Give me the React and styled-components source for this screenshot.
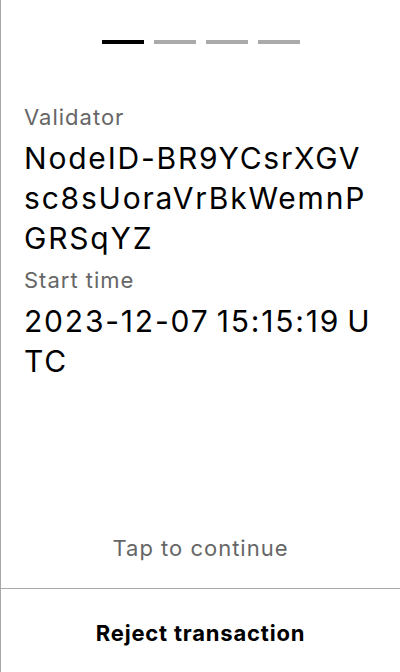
import React from 'react';
import styled, { createGlobalStyle } from 'styled-components';

const GlobalStyle = createGlobalStyle`
    html, body {
        margin: 0;
        padding: 0;
        background: #fff;
    }
    body {
        font-family: Inter, 'Noto Sans', sans-serif;
        -webkit-font-smoothing: antialiased;
    }
`;

const Screen = styled.div`
    height: 672px;
    display: flex;
    flex-direction: column;
    border-left: 1px solid #a8a8a8;
    box-sizing: border-box;
    color: #000;
`;

const Progress = styled.div`
    display: flex;
    justify-content: center;
    gap: 10px;
    padding-top: 40px;
`;

const Step = styled.span`
    width: 42px;
    height: 4px;
    background: ${({ $active }) => ($active ? '#000' : '#aaa')};
`;

const Details = styled.div`
    padding: 59px 24px 0 23px;
    display: flex;
    flex-direction: column;
`;

const Label = styled.div`
    font-size: 22px;
    line-height: 28px;
    letter-spacing: 1px;
    color: #666;
    margin-top: ${({ $first }) => ($first ? '0' : '8px')};
    margin-bottom: 7px;
`;

const Value = styled.div`
    font-size: 30px;
    line-height: 40px;
    letter-spacing: 1.8px;
    word-spacing: -3px;
    word-break: break-all;
    line-break: anywhere;
`;

const Hint = styled.div`
    margin-top: auto;
    font-size: 22px;
    line-height: 28px;
    letter-spacing: 1px;
    color: #666;
    text-align: center;
    padding-bottom: 26px;
`;

const Footer = styled.div`
    border-top: 1px solid #aaa;
    height: 84px;
    box-sizing: border-box;
    padding-top: 30px;
    text-align: center;
    font-size: 22px;
    line-height: 28px;
    letter-spacing: 0.8px;
    font-weight: 700;
    cursor: pointer;
`;

const fields = [
    { label: 'Validator', value: 'NodeID-BR9YCsrXGVsc8sUoraVrBkWemnPGRSqYZ' },
    { label: 'Start time', value: '2023-12-07 15:15:19 UTC' }
];

const App = () => {
    return (
        <>
            <GlobalStyle />
            <Screen>
                <Progress>
                    <Step $active />
                    <Step />
                    <Step />
                    <Step />
                </Progress>
                <Details>
                    {fields.map((f, i) => (
                        <React.Fragment key={f.label}>
                            <Label $first={i === 0}>{f.label}</Label>
                            <Value>{f.value}</Value>
                        </React.Fragment>
                    ))}
                </Details>
                <Hint>Tap to continue</Hint>
                <Footer>Reject transaction</Footer>
            </Screen>
        </>
    );
};

export default App;
